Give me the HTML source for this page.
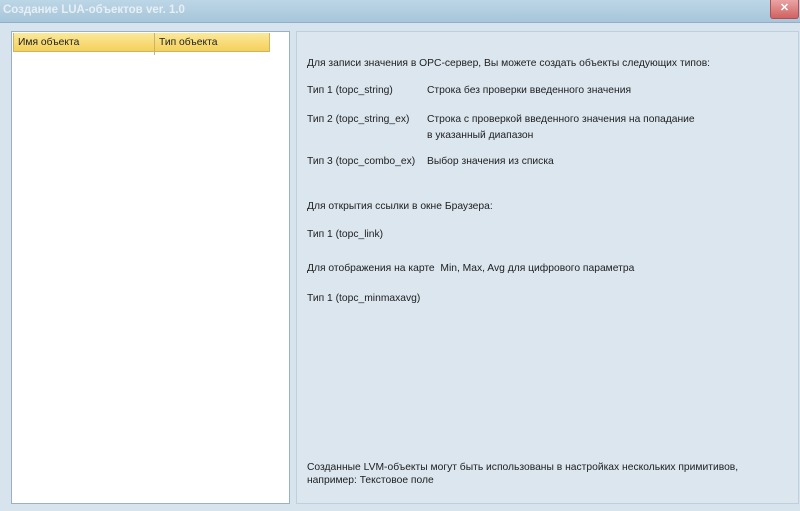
<html><head><style>
body{margin:0;width:800px;height:511px;overflow:hidden;background:#d7e3ed;font-family:"Liberation Sans",sans-serif;font-size:10.3px;color:#1e1e1e;position:relative}
.title{position:absolute;left:0;top:0;width:800px;height:22px;background:linear-gradient(#bcd6e6,#a7c6da);border-bottom:1px solid #8eb0c8}
.title span{position:absolute;left:3px;top:4px;font-weight:bold;color:#e6eff5;font-family:"Liberation Sans",sans-serif;font-size:11.5px}
.close{position:absolute;left:770px;top:0;width:27px;height:18px;background:linear-gradient(#eaa4a4,#d06262);border:1px solid #b05050;border-top:none;border-radius:0 0 3px 3px;color:#fff;text-align:center;font-size:11px;line-height:17px;font-weight:bold}
.list{position:absolute;left:11px;top:31px;width:277px;height:471px;background:#fff;border:1px solid #9ab0c4}
.hdr{position:absolute;left:1px;top:1px;width:255px;height:18px;background:linear-gradient(#fbe89a,#f4d15a);border:1px solid #c9b46a;border-top:none}
.hdr div{position:absolute;top:4px}
.right{position:absolute;left:296px;top:31px;width:501px;height:471px;background:#dbe6ef;border:1px solid #bfcfdd}
.t{position:absolute;white-space:nowrap}
</style></head><body>
<div class="title"><span>Создание LUA-объектов ver. 1.0</span></div>
<div class="close">✕</div>
<div class="list"><div class="hdr"><div style="left:4px">Имя объекта</div><div style="left:140px;top:0;height:18px;border-left:1px solid #c9b46a;padding:4px 0 0 4px;width:100px">Тип объекта</div></div></div>
<div class="right">
<div class="t" style="left:10px;top:26px">Для записи значения в OPC-сервер, Вы можете создать объекты следующих типов:</div>
<div class="t" style="left:10px;top:53px">Тип 1 (topc_string)</div><div class="t" style="left:130px;top:53px">Строка без проверки введенного значения</div>
<div class="t" style="left:10px;top:82px">Тип 2 (topc_string_ex)</div><div class="t" style="left:130px;top:82px">Строка с проверкой введенного значения на попадание</div>
<div class="t" style="left:130px;top:98px">в указанный диапазон</div>
<div class="t" style="left:10px;top:124px">Тип 3 (topc_combo_ex)</div><div class="t" style="left:130px;top:124px">Выбор значения из списка</div>
<div class="t" style="left:10px;top:169px">Для открытия ссылки в окне Браузера:</div>
<div class="t" style="left:10px;top:197px">Тип 1 (topc_link)</div>
<div class="t" style="left:10px;top:231px">Для отображения на карте&nbsp; Min, Max, Avg для цифрового параметра</div>
<div class="t" style="left:10px;top:261px">Тип 1 (topc_minmaxavg)</div>
<div class="t" style="left:10px;top:430px">Созданные LVM-объекты могут быть использованы в настройках нескольких примитивов,</div>
<div class="t" style="left:10px;top:443px">например: Текстовое поле</div>
</div>
</body></html>
